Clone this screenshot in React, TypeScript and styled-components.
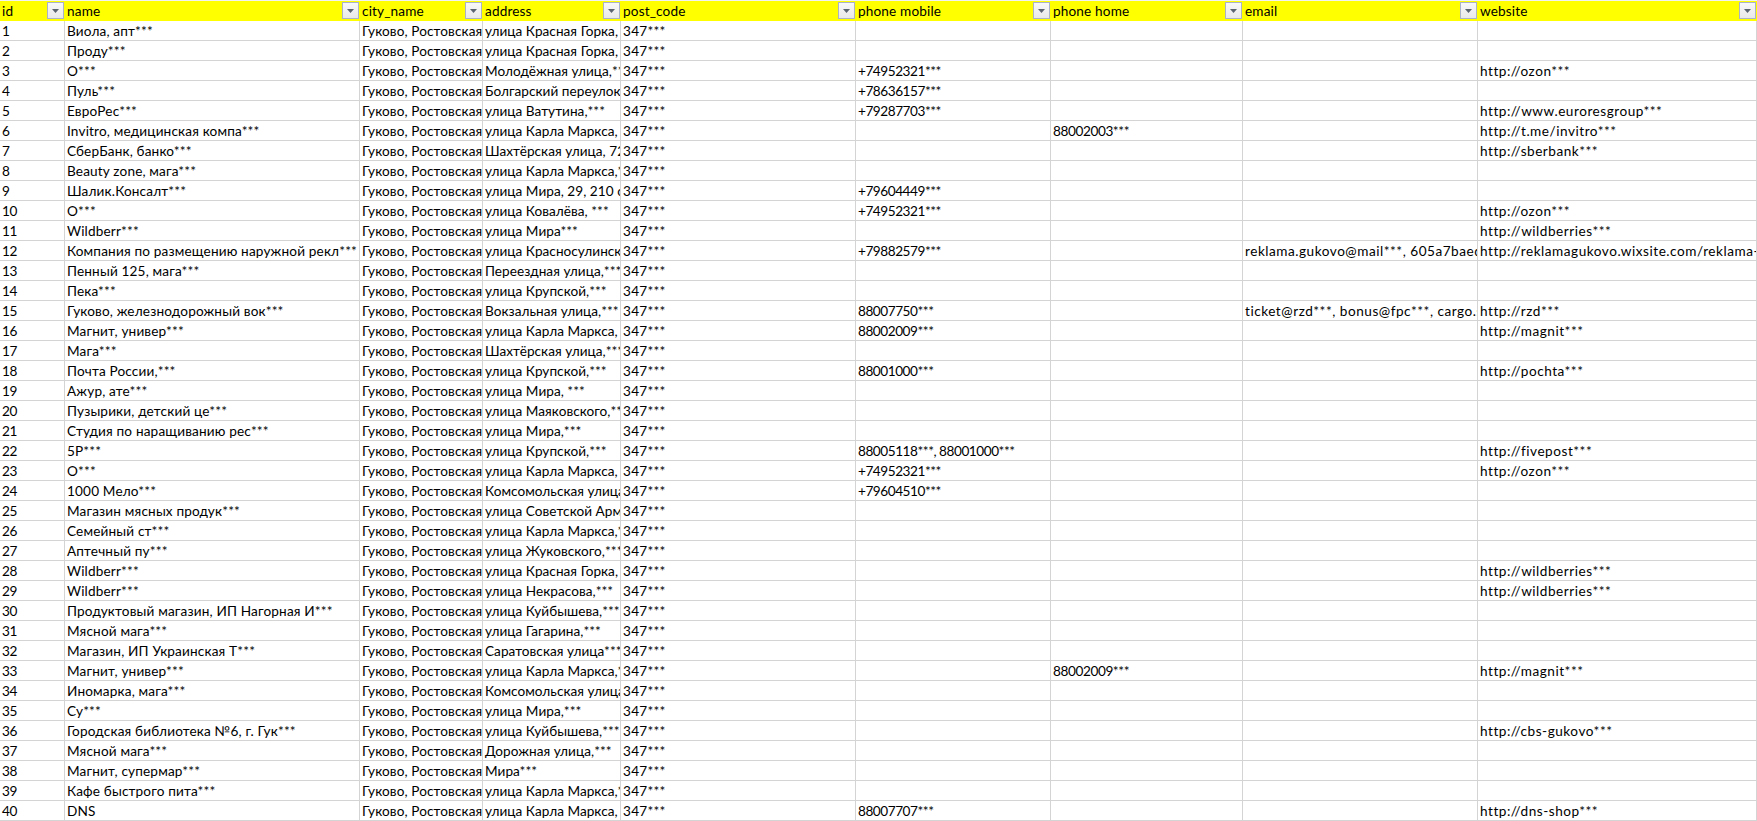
import React from "react";
import styled, { createGlobalStyle } from "styled-components";

const GlobalStyle = createGlobalStyle`
    html, body {
        margin: 0;
        padding: 0;
        background: #fff;
    }
`;

const columns = ["id", "name", "city_name", "address", "post_code", "phone mobile", "phone home", "email", "website"];

// Lato runs a bit off from the sheet's font, digits too wide and latin too narrow
const columnSpacing = [-0.5, 0.16, 0.1, 0.04, 0.25, -0.45, -0.4, 0.52, 0.52];

const CITY = "Гуково, Ростовская область";
const POST = "347***";

// name, address, mobile, home, email, website
const rows: [string, string, string?, string?, string?, string?][] = [
    ["Виола, апт***", "улица Красная Горка, 1***"],
    ["Проду***", "улица Красная Горка, 1***"],
    ["О***", "Молодёжная улица,***", "+74952321***", "", "", "http://ozon***"],
    ["Пуль***", "Болгарский переулок,***", "+78636157***"],
    ["ЕвроРес***", "улица Ватутина,***", "+79287703***", "", "", "http://www.euroresgroup***"],
    ["Invitro, медицинская компа***", "улица Карла Маркса, 1***", "", "88002003***", "", "http://t.me/invitro***"],
    ["СберБанк, банко***", "Шахтёрская улица, 72***", "", "", "", "http://sberbank***"],
    ["Beauty zone, мага***", "улица Карла Маркса,***", ""],
    ["Шалик.Консалт***", "улица Мира, 29, 210 офис", "+79604449***"],
    ["О***", "улица Ковалёва, ***", "+74952321***", "", "", "http://ozon***"],
    ["Wildberr***", "улица Мира***", "", "", "", "http://wildberries***"],
    ["Компания по размещению наружной рекл***", "улица Красносулинская,***", "+79882579***", "", "reklama.gukovo@mail***, 605a7baed1234", "http://reklamagukovo.wixsite.com/reklama-gukovo"],
    ["Пенный 125, мага***", "Переездная улица,***"],
    ["Пека***", "улица Крупской,***"],
    ["Гуково, железнодорожный вок***", "Вокзальная улица,***", "88007750***", "", "ticket@rzd***, bonus@fpc***, cargo.sales", "http://rzd***"],
    ["Магнит, универ***", "улица Карла Маркса, 1***", "88002009***", "", "", "http://magnit***"],
    ["Мага***", "Шахтёрская улица,***"],
    ["Почта России,***", "улица Крупской,***", "88001000***", "", "", "http://pochta***"],
    ["Ажур, ате***", "улица Мира, ***"],
    ["Пузырики, детский це***", "улица Маяковского,***"],
    ["Студия по наращиванию рес***", "улица Мира,***"],
    ["5Р***", "улица Крупской,***", "88005118***, 88001000***", "", "", "http://fivepost***"],
    ["О***", "улица Карла Маркса, 1***", "+74952321***", "", "", "http://ozon***"],
    ["1000 Мело***", "Комсомольская улица,***", "+79604510***"],
    ["Магазин мясных продук***", "улица Советской Армии,***"],
    ["Семейный ст***", "улица Карла Маркса,***"],
    ["Аптечный пу***", "улица Жуковского,***"],
    ["Wildberr***", "улица Красная Горка, 1***", "", "", "", "http://wildberries***"],
    ["Wildberr***", "улица Некрасова,***", "", "", "", "http://wildberries***"],
    ["Продуктовый магазин, ИП Нагорная И***", "улица Куйбышева,***"],
    ["Мясной мага***", "улица Гагарина,***"],
    ["Магазин, ИП Украинская Т***", "Саратовская улица***"],
    ["Магнит, универ***", "улица Карла Маркса,***", "", "88002009***", "", "http://magnit***"],
    ["Иномарка, мага***", "Комсомольская улица,***"],
    ["Су***", "улица Мира,***"],
    ["Городская библиотека №6, г. Гук***", "улица Куйбышева,***", "", "", "", "http://cbs-gukovo***"],
    ["Мясной мага***", "Дорожная улица,***"],
    ["Магнит, супермар***", "Мира***"],
    ["Кафе быстрого пита***", "улица Карла Маркса,***"],
    ["DNS", "улица Карла Маркса, 1***", "88007707***", "", "", "http://dns-shop***"],
];

const FilterArrow = () => (
    <svg width="7" height="4" viewBox="0 0 7 4">
        <path d="M0 0H7L3.5 4Z" fill="#5c6470" />
    </svg>
);

export default function App() {
    return (
        <>
            <GlobalStyle />
            <Sheet>
                {columns.map((col) => (
                    <HeaderCell key={col}>
                        <HeaderLabel>{col}</HeaderLabel>
                        <FilterButton>
                            <FilterArrow />
                        </FilterButton>
                    </HeaderCell>
                ))}
                {rows.map((row, i) => {
                    const [name, address, mobile, home, email, website] = row;
                    const cells = [String(i + 1), name, CITY, address, POST, mobile, home, email, website];
                    return cells.map((text, c) => (
                        <Cell key={`${i}-${c}`} $spacing={columnSpacing[c]}>{text}</Cell>
                    ));
                })}
            </Sheet>
        </>
    );
}

const Sheet = styled.div`
    display: grid;
    grid-template-columns: 65px 295px 123px 138px 235px 195px 192px 235px 279px;
    grid-template-rows: 21px repeat(40, 20px);
    width: 1757px;
    font-family: "Lato", "Noto Sans", sans-serif;
    font-size: 13.6px;
    color: #000;
    overflow: hidden;
`;

const HeaderCell = styled.div`
    display: flex;
    align-items: center;
    justify-content: space-between;
    box-sizing: border-box;
    padding: 0 1px 1px 2px;
    background: #ffff00;
    border-top: 1px solid #f2f2f2;
    min-width: 0;
`;

const HeaderLabel = styled.span`
    padding-top: 1px;
    white-space: nowrap;
    line-height: 19px;
    letter-spacing: 0.15px;
`;

const FilterButton = styled.div`
    display: flex;
    align-items: center;
    justify-content: center;
    box-sizing: border-box;
    width: 17px;
    height: 17px;
    flex-shrink: 0;
    border: 1px solid #a9b2c6;
    background: linear-gradient(#f8f8f8, #e9e9ea);
`;

const Cell = styled.div<{ $spacing: number }>`
    box-sizing: border-box;
    min-width: 0;
    padding: 1px 0 0 2px;
    border-right: 1px solid #d4d4d4;
    border-bottom: 1px solid #d4d4d4;
    line-height: 18px;
    letter-spacing: ${({ $spacing }) => $spacing}px;
    white-space: nowrap;
    overflow: hidden;
`;
